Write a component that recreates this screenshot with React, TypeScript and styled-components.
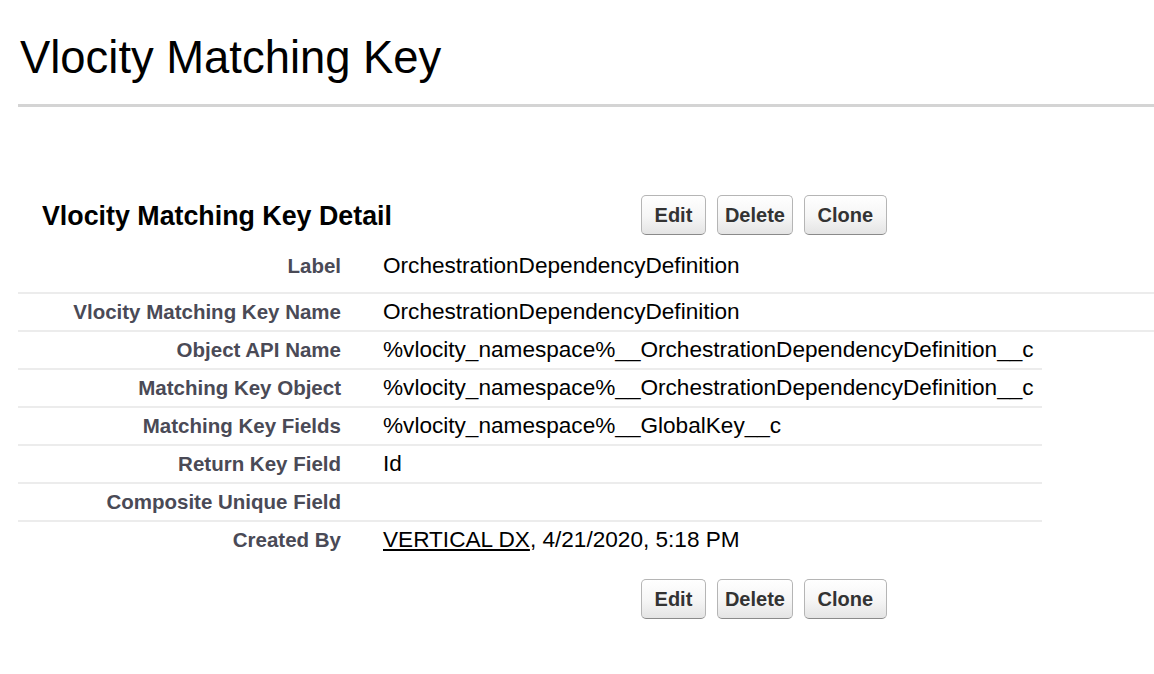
import React from "react";
import styled, { createGlobalStyle } from "styled-components";

const GlobalStyle = createGlobalStyle`
  html, body {
    margin: 0;
    padding: 0;
    background: #ffffff;
    font-family: "Liberation Sans", Arial, Helvetica, sans-serif;
    color: #000000;
  }
`;

const Page = styled.div`
  padding-left: 18px;
  width: 1136px;
`;

const TitleBar = styled.div`
  padding: 32px 0 20px 2px;
  border-bottom: 3px solid #d4d4d4;
`;

const Title = styled.h1`
  margin: 0;
  font-size: 45.4px;
  line-height: 52px;
  font-weight: 400;
  color: #000000;
`;

const Block = styled.div`
  margin-top: 88px;
`;

const HeaderRow = styled.div`
  display: flex;
  align-items: center;
  height: 40px;
  padding-left: 24px;
`;

const Heading = styled.h2`
  margin: 0;
  width: 599px;
  font-size: 26.8px;
  font-weight: 700;
  line-height: 32px;
  padding-top: 2px;
  color: #000000;
`;

const ButtonBar = styled.div`
  display: flex;
  gap: 11px;
`;

const Button = styled.button`
  height: 40px;
  padding: 0 7px;
  border: 1px solid #b5b5b5;
  border-bottom-color: #8a8a8a;
  border-radius: 5px;
  background: linear-gradient(to bottom, #ffffff 0%, #f5f5f5 55%, #e4e4e4 100%);
  font-family: "Liberation Sans", Arial, sans-serif;
  font-weight: 700;
  font-size: 20px;
  color: #333333;
  white-space: pre;
  cursor: pointer;
`;

const List = styled.div`
  margin-top: 12px;
`;

const Row = styled.div<{ $wide?: boolean; $first?: boolean; $last?: boolean }>`
  display: grid;
  grid-template-columns: 323px 1fr;
  column-gap: 42px;
  align-items: center;
  width: ${(p) => (p.$wide ? "auto" : "1024px")};
  padding: ${(p) => (p.$first ? "8px 0 15px" : "7px 0")};
  border-bottom: ${(p) => (p.$last ? "none" : "2px solid #ececec")};
`;

const Label = styled.div`
  text-align: right;
  font-weight: 700;
  font-size: 20.5px;
  line-height: 22px;
  color: #4a4a56;
  white-space: nowrap;
`;

const Value = styled.div`
  font-size: 22.6px;
  line-height: 22px;
  color: #000000;
  white-space: nowrap;
  min-height: 22px;
`;

const UserLink = styled.a`
  color: #000000;
  text-decoration: underline;
`;

const Footer = styled.div`
  margin-top: 21px;
  padding-left: 623px;
`;

type Field = { label: string; value: React.ReactNode; wide?: boolean };

const fields: Field[] = [
  { label: "Label", value: "OrchestrationDependencyDefinition", wide: true },
  { label: "Vlocity Matching Key Name", value: "OrchestrationDependencyDefinition", wide: true },
  { label: "Object API Name", value: "%vlocity_namespace%__OrchestrationDependencyDefinition__c" },
  { label: "Matching Key Object", value: "%vlocity_namespace%__OrchestrationDependencyDefinition__c" },
  { label: "Matching Key Fields", value: "%vlocity_namespace%__GlobalKey__c" },
  { label: "Return Key Field", value: "Id" },
  { label: "Composite Unique Field", value: "" },
  {
    label: "Created By",
    value: (
      <>
        <UserLink href="#">VERTICAL DX</UserLink>, 4/21/2020, 5:18 PM
      </>
    ),
  },
];

const Buttons = () => (
  <ButtonBar>
    <Button>{" Edit "}</Button>
    <Button>Delete</Button>
    <Button>{" Clone "}</Button>
  </ButtonBar>
);

export default function App() {
  return (
    <>
      <GlobalStyle />
      <Page>
        <TitleBar>
          <Title>Vlocity Matching Key</Title>
        </TitleBar>
        <Block>
          <HeaderRow>
            <Heading>Vlocity Matching Key Detail</Heading>
            <Buttons />
          </HeaderRow>
          <List>
            {fields.map((f, i) => (
              <Row
                key={f.label}
                $wide={f.wide}
                $first={i === 0}
                $last={i === fields.length - 1}
              >
                <Label>{f.label}</Label>
                <Value>{f.value}</Value>
              </Row>
            ))}
          </List>
          <Footer>
            <Buttons />
          </Footer>
        </Block>
      </Page>
    </>
  );
}
